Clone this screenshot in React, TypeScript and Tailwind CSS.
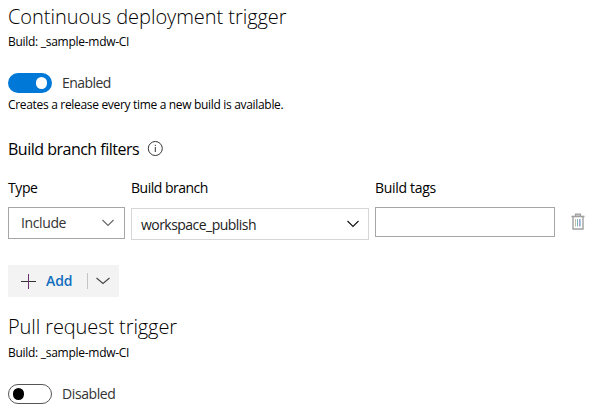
import React from "react";

const font = { fontFamily: '"Open Sans", "Noto Sans", sans-serif' };

function Chevron({ color, width = 12 }: { color: string; width?: number }) {
  return (
    <svg width={width} height="8" viewBox={`0 0 ${width} 8`} fill="none" stroke={color} strokeWidth="1.1">
      <path d={`M0.5 1 L${width / 2} 6.5 L${width - 0.5} 1`} />
    </svg>
  );
}

function BuildName() {
  return <p className="h-4 whitespace-nowrap text-xs leading-4 tracking-[-0.28px] text-black">Build: _sample-mdw-CI</p>;
}

function InfoIcon() {
  return (
    <svg width="16" height="16" viewBox="0 0 16 16" fill="none" stroke="#333" strokeWidth="1">
      <circle cx="8.3" cy="7.5" r="7" />
      <path d="M8.3 6v5M8.3 3.8v1.2" />
    </svg>
  );
}

function TrashIcon() {
  return (
    <svg width="14" height="17" viewBox="0 0 14 17" fill="none" stroke="#a0a0a0" strokeWidth="1">
      <path d="M0.5 3.5h13" strokeWidth="1.6" />
      <path d="M4.5 3V1.2h5V3" fill="#c4c4c4" strokeWidth="1.2" />
      <path d="M2 4v12h10V4" strokeWidth="1.4" />
      <path d="M4.5 6v7.5" stroke="#c3bba6" />
      <path d="M6.5 6v7.5" stroke="#7db5bd" />
      <path d="M8.5 6v7.5" stroke="#a99fc8" />
      <path d="M9.5 6v7.5" stroke="#a9cbe8" />
    </svg>
  );
}

export default function App() {
  return (
    <main className="h-[410px] w-[598px] overflow-hidden bg-white pl-2" style={font}>
      <h1 className="h-[34px] whitespace-nowrap text-xl font-light leading-[33px] tracking-[-0.05px] text-black">Continuous deployment trigger</h1>
      <BuildName />

      <div className="mt-[23px] flex h-5 items-center">
        <span className="flex h-5 w-11 items-center justify-end rounded-full bg-[#0078d7] pr-[5px]">
          <span className="h-3 w-[11px] rounded-full bg-white" />
        </span>
        <span className="ml-2.5 text-sm leading-5 tracking-[-0.55px] text-[#333]">Enabled</span>
      </div>
      <p className="mt-1 h-4 whitespace-nowrap text-xs leading-4 tracking-[-0.32px] text-black">Creates a release every time a new build is available.</p>

      <div className="mt-6 flex h-6 items-center">
        <h2 className="w-[139px] whitespace-nowrap text-base leading-6 tracking-[-0.5px] text-black">Build branch filters</h2>
        <InfoIcon />
      </div>

      <div className="mt-[17px] flex">
        <div className="w-[117px]">
          <div className="h-[29px] text-sm leading-5 tracking-[-0.4px] text-black">Type</div>
          <div className="flex h-8 items-center justify-between border border-[#a6a6a6] pl-3 pr-2.5 text-sm tracking-[-0.38px] text-[#333]">
            <span>Include</span>
            <Chevron color="#666" />
          </div>
        </div>
        <div className="ml-1.5 w-[238px]">
          <div className="h-[30px] text-sm leading-5 tracking-[-0.5px] text-black">Build branch</div>
          <div className="flex h-8 items-center justify-between border border-[#d6d6d6] pl-[9px] pr-[9px] text-sm tracking-[-0.54px] text-[#222]">
            <span className="pt-0.5">workspace_publish</span>
            <Chevron color="#111" />
          </div>
        </div>
        <div className="ml-1.5 w-[180px]">
          <div className="h-[29px] text-sm leading-5 tracking-[-0.3px] text-black">Build tags</div>
          <div className="h-[30px] border border-[#a6a6a6]" />
        </div>
        <div className="ml-4 pt-[35px]"><TrashIcon /></div>
      </div>

      <div className="mt-[25px] flex h-8 w-[111px] items-center bg-[#f3f3f3] pl-[13px]">
        <svg width="15" height="15" viewBox="0 0 15 15" fill="none" stroke="#333" strokeWidth="1">
          <path d="M0 7.5h15" />
          <path d="M7.5 0v15" stroke="#68306d" />
        </svg>
        <span className="ml-2.5 w-[41px] text-sm font-semibold tracking-[-0.1px] text-[#106ebe]">Add</span>
        <span className="h-4 w-px bg-[#c4c4c4]" />
        <span className="ml-2"><Chevron color="#444" width={14} /></span>
      </div>

      <h1 className="mt-[14px] h-[34px] whitespace-nowrap text-xl font-light leading-8 tracking-[-0.1px] text-black">Pull request trigger</h1>
      <BuildName />
      <div className="mt-[23px] flex h-5 items-center">
        <span className="flex h-5 w-11 items-center rounded-full border border-[#555] pl-1">
          <span className="h-3 w-[11px] rounded-full bg-black" />
        </span>
        <span className="ml-2.5 text-sm leading-5 tracking-[-0.4px] text-[#333]">Disabled</span>
      </div>
    </main>
  );
}
